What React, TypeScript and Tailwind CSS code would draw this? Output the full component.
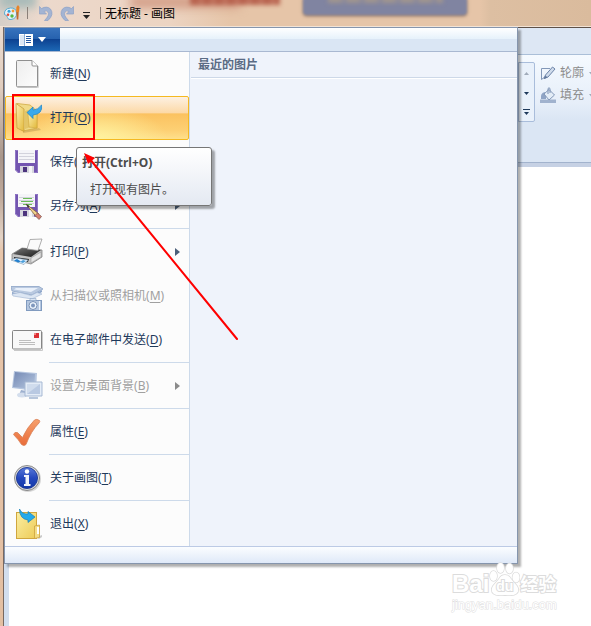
import type { ReactNode } from "react";

function NewIcon() {
  return (
    <svg viewBox="0 0 32 32" className="h-8 w-8 shrink-0" aria-hidden="true">
      <defs>
        <linearGradient id="sheet" x1="0" y1="0" x2="1" y2="1">
          <stop offset="0" stopColor="#ededed" />
          <stop offset="1" stopColor="#fdfdfd" />
        </linearGradient>
      </defs>
      <path d="M6.5 29.5h21V8" fill="none" stroke="#d8d8d8" />
      <path d="M5.5 3.5q0-1 1-1H21l5.5 5.5v20q0 .8-1 .8h-19q-1 0-1-1z" fill="url(#sheet)" stroke="#8f8f8f" />
      <path d="M21 2.5V7q0 1 1 1h4.500" fill="#fff" stroke="#8f8f8f" />
    </svg>
  );
}

function OpenIcon() {
  return (
    <svg viewBox="0 0 32 32" className="h-8 w-8 shrink-0" aria-hidden="true">
      <defs>
        <linearGradient id="folder" x1="0" y1="0" x2="1" y2="1">
          <stop offset="0" stopColor="#fdf0b0" />
          <stop offset="1" stopColor="#e2b93c" />
        </linearGradient>
      </defs>
      <path d="M12 28l16-2 2 2-18 3z" fill="#b99a52" opacity=".5" />
      <path d="M6 1.500L19 3l7 6v17l-14 3z" fill="#f0da88" stroke="#d0ab45" strokeWidth=".8" />
      <path d="M14 9l3-1 3 2v15l-6 2z" fill="#e3c566" />
      <path d="M17 12l9-2v16l-8-1z" fill="url(#folder)" stroke="#cfa43b" strokeWidth=".6" />
      <path d="M5 1.500l8 5.500v22.500L6 26z" fill="url(#folder)" stroke="#c9a03c" strokeWidth=".8" />
      <path d="M16 10.500L22 5v3q5 0 8.500-5 1.500 9-8.500 10v3.500z" fill="#39a9ec" stroke="#1682c8" strokeWidth=".7" />
    </svg>
  );
}

function SaveIcon({ pencil = false }: { pencil?: boolean }) {
  return (
    <svg viewBox="0 0 32 32" className="h-8 w-8 shrink-0" aria-hidden="true">
      <path d="M4 4h23v23H7l-3-3z" fill="#7355b0" />
      <path d="M4.500 4.500h22v22H7.500l-3-3z" fill="none" stroke="#8f77c4" />
      <path d="M7 4h17v13H7z" fill="#f5f5f8" />
      <path d="M8 7.500h15M8 10.500h15M8 13.500h15" stroke="#d3d3dc" />
      {pencil && <path d="M12 8.500h9M10 11.500h12M12 14.500h9" stroke="#6abb55" />}
      <path d="M9 20h14v7H9z" fill="#d6d6de" />
      <path d="M12 21h4v5h-4z" fill="#4c347d" />
      <path d="M18 20h3v7h-3z" fill="#f4f4f7" />
      {pencil && (
        <g>
          <path d="M15 14l13 10-2.500 3z" fill="#f3d38d" stroke="#86643a" strokeWidth=".8" />
          <path d="M15 14l3.500 2-1.500 2z" fill="#333" />
          <path d="M26.500 23l4 3.500-2.500 3-4-4z" fill="#d77e70" stroke="#765149" strokeWidth=".7" />
        </g>
      )}
    </svg>
  );
}

function PrintIcon() {
  return (
    <svg viewBox="0 0 32 32" className="h-8 w-8 shrink-0" aria-hidden="true">
      <defs>
        <linearGradient id="printer" x1="0" y1="0" x2="1" y2="1">
          <stop offset="0" stopColor="#777" />
          <stop offset="1" stopColor="#191919" />
        </linearGradient>
      </defs>
      <path d="M1 18L11 12l20 2v7L20 28 1 23z" fill="#c3c3c3" stroke="#777" strokeWidth=".7" />
      <path d="M2 18l9-6 19 2-10 7z" fill="url(#printer)" />
      <path d="M16 13l3-9.500L31 3l-4 11.500z" fill="#fafafa" stroke="#999" strokeWidth=".8" />
      <path d="M20 22l10-6v5l-10 6z" fill="#e2e2e2" stroke="#8c8c8c" strokeWidth=".5" />
      <path d="M3 21l15 2-1 3-14-3z" fill="#282828" />
      <path d="M0 24l5-2 12 2-4 4.500z" fill="#e9f4ff" stroke="#7693ac" strokeWidth=".6" />
      <path d="M3 24.500l3-1.500 4 2.500-3 1z" fill="#2481cf" />
      <path d="M9 26l3-2 3 1-3 2z" fill="#4c9fd9" />
    </svg>
  );
}

function ScannerIcon() {
  return (
    <svg viewBox="0 0 32 32" className="h-8 w-8 shrink-0" aria-hidden="true">
      <path d="M0 6.500h28l4 2.500-11 6-20-4z" fill="#b9c9e0" stroke="#8ba3c5" strokeWidth=".8" />
      <path d="M5 8h22l-7 4L3 9.500z" fill="#e9f0fa" />
      <path d="M1 12l19 4 11-6v2l-10 6L1 14.500z" fill="#8ea6ca" />
      <path d="M1 14l8-1.500 11 3 6-3 5 1.500-10 5L2 16z" fill="#dce6f3" stroke="#a0b4d1" strokeWidth=".6" />
      <rect x="15.500" y="20.500" width="15" height="10" fill="#b5c7e0" stroke="#819bbf" />
      <path d="M19 18.500h6v2h-6z" fill="#dce6f4" stroke="#8ca4c5" strokeWidth=".6" />
      <circle cx="22" cy="25.500" r="4" fill="#edf4fb" stroke="#7991b5" />
      <circle cx="22" cy="25.500" r="2" fill="#7e97bc" />
      <path d="M28.500 21v9" stroke="#eef4fb" />
    </svg>
  );
}

function MailIcon() {
  return (
    <svg viewBox="0 0 32 32" className="h-8 w-8 shrink-0" aria-hidden="true">
      <path d="M3 26.500h28.500V8" fill="none" stroke="#c9c9c9" />
      <rect x="1.500" y="6.500" width="29" height="18.500" rx="1" fill="#f8f8f8" stroke="#858585" />
      <path d="M23 9h5v5h-5z" fill="#dc3035" />
      <path d="M23 9h2v2h-2z" fill="#ef8583" />
      <path d="M8 16.500h12M8 18.500h16M8 20.500h16" stroke="#b6b6b6" strokeWidth=".9" />
    </svg>
  );
}

function DesktopIcon() {
  return (
    <svg viewBox="0 0 32 32" className="h-8 w-8 shrink-0" aria-hidden="true">
      <defs>
        <linearGradient id="screen" x1="0" y1="0" x2="1" y2="1">
          <stop offset="0" stopColor="#7489b4" />
          <stop offset="1" stopColor="#b6c7e0" />
        </linearGradient>
      </defs>
      <path d="M3 1l23 2-1 18L1 18z" fill="#b6c6df" />
      <path d="M4 2l20 2-1 15L2 17z" fill="url(#screen)" />
      <path d="M10 20l5 1v4H8z" fill="#9db0cf" />
      <ellipse cx="11" cy="25" rx="5" ry="2.500" fill="#d4deed" />
      <path d="M14 12h17v14H14z" fill="#e4ecf7" stroke="#a7b9d3" />
      <path d="M16 14h13v10H16z" fill="#b9c9e2" />
      <path d="M16 24V14h13z" fill="#d0dced" />
      <path d="M18 27h9v2h-9z" fill="#b7c6dc" />
    </svg>
  );
}

function CheckIcon() {
  return (
    <svg viewBox="0 0 32 32" className="h-8 w-8 shrink-0" aria-hidden="true">
      <defs>
        <linearGradient id="tick" x1="0" y1="0" x2="0" y2="1">
          <stop offset="0" stopColor="#f6a06d" />
          <stop offset="1" stopColor="#e96c39" />
        </linearGradient>
      </defs>
      <path
        d="M2.500 18.500q1-3 4-2l5 5q4.500-10 12-17.500 2-1.500 5 .5.800 1-.5 2.500Q20 15 15 28.500q-2 2-4.500 0-3-5-8-10z"
        fill="url(#tick)"
        stroke="#d88158"
        strokeWidth=".8"
      />
    </svg>
  );
}

function InfoIcon() {
  return (
    <svg viewBox="0 0 32 32" className="h-8 w-8 shrink-0" aria-hidden="true">
      <defs>
        <linearGradient id="info" x1="0" y1="0" x2="0" y2="1">
          <stop offset="0" stopColor="#5979da" />
          <stop offset=".5" stopColor="#2548bd" />
          <stop offset="1" stopColor="#1236a7" />
        </linearGradient>
      </defs>
      <circle cx="17" cy="17" r="13" fill="#bdbdbd" opacity=".6" />
      <circle cx="16" cy="16" r="12.500" fill="#d9d9dc" stroke="#747474" strokeWidth=".8" />
      <circle cx="16" cy="16" r="10.600" fill="url(#info)" stroke="#14328f" strokeWidth=".8" />
      <circle cx="16" cy="9.500" r="2.200" fill="#fff" />
      <path d="M13 13h5v9h1.500v2H13v-2h1.500v-7H13z" fill="#f2f4fb" />
    </svg>
  );
}

function ExitIcon() {
  return (
    <svg viewBox="0 0 32 32" className="h-8 w-8 shrink-0" aria-hidden="true">
      <defs>
        <linearGradient id="exit" x1="0" y1="0" x2="1" y2="1">
          <stop offset="0" stopColor="#fbeea2" />
          <stop offset="1" stopColor="#edcb57" />
        </linearGradient>
      </defs>
      <path d="M26 29l5-2v2l-3 2z" fill="#999" opacity=".5" />
      <rect x="5.500" y="4.500" width="20" height="26" fill="url(#exit)" stroke="#d0a63e" />
      <path d="M23.500 18l5-1v12.500l-5 1z" fill="#f3dc84" stroke="#cda13d" strokeWidth=".8" />
      <path d="M26 19h2v7h-2z" fill="#fff" />
      <path d="M8.500 1Q11 6.500 17 6V3.500l7 5.500-7 5.500V12Q8.500 11 8.500 1z" fill="#23aaeb" stroke="#197fb8" strokeWidth=".7" />
    </svg>
  );
}

function PaintLogo() {
  return (
    <svg viewBox="0 0 16 16" className="h-4 w-4" aria-hidden="true">
      <path d="M6.500 3Q12 2.500 12.500 8T7 14.500Q4 15 3.500 12.500T.5 9.500Q0 3.500 6.500 3z" fill="#e4f3fb" stroke="#5aabd0" />
      <circle cx="5" cy="6.300" r="1.500" fill="#34a4dc" />
      <circle cx="9" cy="6" r="1.400" fill="#f29b35" />
      <circle cx="4" cy="9.700" r="1.300" fill="#e24e3a" />
      <circle cx="8" cy="11" r="1.700" fill="#55b942" />
      <path d="M12 7l.500-5L14 0l1.500 2-.5 5z" fill="#e78328" />
      <path d="M12.300 7h2.400l-.4 7.500h-1.500z" fill="#c56c2c" />
    </svg>
  );
}

function UndoIcon({ flip = false }: { flip?: boolean }) {
  return (
    <svg viewBox="0 0 14 15" className={flip ? "h-[15px] w-3.5 -scale-x-100" : "h-[15px] w-3.5"} aria-hidden="true">
      <path
        d="M.5.5l2 2Q8-.5 11.500 3q4 5.500-2.500 11.500H5.500Q11 9 9 6 7.500 4 5 5.500L7.500 8h-7z"
        fill="#a3b4d3"
        stroke="#8da1c5"
        strokeWidth=".7"
      />
    </svg>
  );
}

function Triangle({ color = "#1e395b" }: { color?: string }) {
  return (
    <svg viewBox="0 0 5 3" className="h-[3px] w-[5px] shrink-0" aria-hidden="true">
      <path d="M0 0h5L2.500 3z" fill={color} />
    </svg>
  );
}

type Item = {
  label: string;
  hotkey: string;
  icon: ReactNode;
  state?: "active" | "disabled";
  submenu?: boolean;
};

const groups: Item[][] = [
  [
    { label: "新建", hotkey: "N", icon: <NewIcon /> },
    { label: "打开", hotkey: "O", icon: <OpenIcon />, state: "active" },
    { label: "保存", hotkey: "S", icon: <SaveIcon /> },
    { label: "另存为", hotkey: "A", icon: <SaveIcon pencil />, submenu: true },
  ],
  [
    { label: "打印", hotkey: "P", icon: <PrintIcon />, submenu: true },
    { label: "从扫描仪或照相机", hotkey: "M", icon: <ScannerIcon />, state: "disabled" },
    { label: "在电子邮件中发送", hotkey: "D", icon: <MailIcon /> },
  ],
  [{ label: "设置为桌面背景", hotkey: "B", icon: <DesktopIcon />, state: "disabled", submenu: true }],
  [{ label: "属性", hotkey: "E", icon: <CheckIcon /> }],
  [{ label: "关于画图", hotkey: "T", icon: <InfoIcon /> }],
  [{ label: "退出", hotkey: "X", icon: <ExitIcon /> }],
];

function MenuItem({ item }: { item: Item }) {
  const disabled = item.state === "disabled";
  const look =
    item.state === "active"
      ? "border-[#f5b921] bg-[radial-gradient(ellipse_at_bottom,#fff3a0_0%,#fff3a000_55%),linear-gradient(#fdf1e2_0%,#fcd9a6_38%,#fbc260_40%,#fdd074_80%,#fee08c_100%)]"
      : "border-transparent";
  return (
    <button
      type="button"
      role="menuitem"
      disabled={disabled}
      className={`flex h-11 w-full items-center gap-[7px] rounded-[2px] border pr-2 pl-[5px] text-left whitespace-nowrap ${look} ${
        disabled ? "text-[#a0a0a0]" : "text-[#1e395b]"
      }`}
    >
      {item.icon}
      <span className="grow">
        {item.label}(<span className="underline underline-offset-2">{item.hotkey}</span>)
      </span>
      {item.submenu && (
        <svg viewBox="0 0 5 8" className="h-2 w-[5px] shrink-0" aria-hidden="true">
          <path d="M0 0l5 4-5 4z" fill={disabled ? "#8b8b8b" : "#4c607a"} />
        </svg>
      )}
    </button>
  );
}

function TitleBar() {
  return (
    <header className="relative flex h-[27px] shrink-0 items-center overflow-hidden border-b border-[#f2e3d5] bg-[linear-gradient(90deg,#d6cfc8_0px,#ecd9cc_40px,#ecd4c2_170px,#e6c5a8_230px,#e6c5a8_480px,#ddbfa2_490px,#dabb9d_100%)]">
      <div className="absolute -top-2 left-0 h-4 w-9 bg-[#a9bbb9] blur-[4px]" />
      <div className="absolute -top-1 left-[130px] h-3 w-[110px] bg-[#d39d86] blur-[5px]" />
      <div className="absolute -top-3 left-[190px] h-[17px] w-[90px] bg-[repeating-linear-gradient(90deg,#b86450_0px,#b86450_9px,#cf8c76_12px)] blur-[2px]" />
      <div className="absolute -top-1 left-[303px] h-[19px] w-[164px] rounded bg-[#8084a1] shadow-[0_1px_3px_#77605a] blur-[1px]" />
      <div className="absolute -top-1 left-[328px] h-[7px] w-[115px] bg-[repeating-linear-gradient(90deg,#a0958f_0px,#a0958f_12px,#8084a1_18px)] blur-[2px]" />
      <div className="relative flex items-center pl-1">
        <PaintLogo />
        <span className="ml-[7px] h-3 w-px bg-[#8b8079]" />
        <button type="button" aria-label="撤消" className="ml-[11px]">
          <UndoIcon />
        </button>
        <button type="button" aria-label="重做" className="ml-[7px]">
          <UndoIcon flip />
        </button>
        <button type="button" aria-label="自定义快速访问工具栏" className="ml-[9px] flex flex-col items-center gap-0.5 pt-1">
          <span className="h-px w-[7px] bg-[#222]" />
          <svg viewBox="0 0 7 4" className="h-1 w-[7px]" aria-hidden="true">
            <path d="M0 0h7L3.500 4z" fill="#222" />
          </svg>
        </button>
        <span className="ml-[10px] h-3 w-px bg-[#8b8079]" />
        <h1 className="pt-px pl-1 text-black">无标题 - 画图</h1>
      </div>
    </header>
  );
}

function Ribbon() {
  return (
    <div className="border-t border-[#5d5149] bg-[#dde7f4] pt-[26px]">
      <div className="flex h-[109px] justify-end border-y border-[#aabfd8] border-b-[#a2b3cd] bg-[linear-gradient(#f5faff,#e6eef9_45%,#dbe6f4_60%,#dbe6f4)] pt-[7px]">
        <div className="flex h-[60px] w-[17px] flex-col rounded-r-[2px] border border-[#a9bddb] bg-[#e9f1fb]">
          <button type="button" aria-label="上一行" className="grid h-5 place-items-center">
            <span className="rotate-180">
              <Triangle color="#a0abba" />
            </span>
          </button>
          <button type="button" aria-label="下一行" className="grid h-5 place-items-center">
            <Triangle />
          </button>
          <button type="button" aria-label="更多形状" className="flex h-[18px] flex-col items-center justify-center gap-0.5">
            <span className="h-px w-[7px] bg-[#1e395b]" />
            <Triangle />
          </button>
        </div>
        <div className="flex w-14 flex-col pl-[5px] text-[#8d8d8d]">
          <button type="button" className="flex h-[22px] items-center gap-1 whitespace-nowrap">
            <svg viewBox="0 0 16 16" className="h-4 w-4 shrink-0" aria-hidden="true">
              <path d="M10 3.500H1.500v11L6 11" fill="none" stroke="#8398b8" />
              <path d="M4 13.500L5.500 10l7-8 2.500 2-7 8z" fill="#cfdbeb" stroke="#6d84a8" />
              <path d="M4 14l1.500-3.500 2 2z" fill="#60779b" />
            </svg>
            轮廓
            <span className="pl-px">
              <Triangle color="#a0abba" />
            </span>
          </button>
          <button type="button" className="flex h-[22px] items-center gap-1 whitespace-nowrap">
            <svg viewBox="0 0 16 16" className="h-4 w-4 shrink-0" aria-hidden="true">
              <path d="M0 12.500h16V16H0z" fill="#a0b2ce" />
              <path d="M5 5Q0 6 1 12h5V8z" fill="#8fa4c5" />
              <path d="M4 7l5-4.500L14.500 8 9 13z" fill="#e4edf7" stroke="#8297b7" />
              <path d="M8 7V1.500Q9 0 10 1.500V6" fill="none" stroke="#7c91b3" />
            </svg>
            填充
            <span className="pl-px">
              <Triangle color="#a0abba" />
            </span>
          </button>
        </div>
      </div>
      <div className="h-1 bg-[#c6d1e4]" />
    </div>
  );
}

function FileMenu() {
  return (
    <div className="absolute top-[27px] left-1 w-[514px] border border-[#8595ad] bg-[#eff3fb] shadow-[3px_3px_2px_#00000050]">
      <div className="flex h-6 border-b border-[#a9b8d1] bg-[linear-gradient(#ffffff,#e7f2fb_46%,#dae6f4_50%,#dae6f4)]">
        <button
          type="button"
          aria-label="画图菜单"
          className="flex w-[55px] items-center gap-[5px] bg-[linear-gradient(#3873bd,#2661ae_48%,#0d4291_50%,#1d68b5)] pl-3.5"
        >
          <svg viewBox="0 0 14 12" className="h-3 w-3.5" aria-hidden="true">
            <path d="M0 0h14v12H0z" fill="#fff" />
            <path d="M1 1h4v10H1z" fill="#dce7f5" />
            <path d="M5.500 0v12" stroke="#8badd5" />
            <path d="M7 2.500h5M7 4.500h5M7 6.500h5M7 8.500h5" stroke="#2459a3" />
          </svg>
          <svg viewBox="0 0 8 5" className="h-[5px] w-2" aria-hidden="true">
            <path d="M0 0h8L4 5z" fill="#fff" />
          </svg>
        </button>
      </div>
      <div className="flex">
        <div role="menu" className="w-[185px] border-r border-[#cddaea] bg-[#fcfcfc]">
          {groups.map((group, i) => (
            <div key={group[0].hotkey} role="group">
              {i > 0 && <div className="ml-11 h-0.5 border-t border-[#cddaea]" />}
              {group.map((item) => (
                <MenuItem key={item.hotkey} item={item} />
              ))}
            </div>
          ))}
        </div>
        <section className="ml-px grow">
          <h2 className="border-b border-[#cdd8e8] py-1 pl-[7px] leading-[17px] font-bold text-[#5a6b84] shadow-[0_1px_#fff]">
            最近的图片
          </h2>
        </section>
      </div>
      <div className="h-[17px] border-t border-[#bccae5] bg-[linear-gradient(#fbfdff,#dfe9f8)]" />
    </div>
  );
}

function Tooltip() {
  return (
    <div
      role="tooltip"
      className="absolute top-[147px] left-[76px] w-[136px] rounded-[3px] border border-[#767676] bg-[linear-gradient(#ffffff,#e4e9f2)] px-[5px] py-1.5 text-[#4c4c4c] shadow-[3px_3px_2px_#00000055]"
    >
      <p className="leading-[18px] font-bold">打开(Ctrl+O)</p>
      <p className="mt-[9px] pl-2 leading-[18px]">打开现有图片。</p>
    </div>
  );
}

function Annotation() {
  return (
    <svg viewBox="0 0 240 345" className="pointer-events-none absolute top-0 left-0 h-[345px] w-60" aria-hidden="true">
      <rect x="13" y="95" width="81" height="44" fill="none" stroke="#f00" strokeWidth="2" />
      <path d="M89 158L237 339" stroke="#f00" strokeWidth="2" strokeLinecap="round" />
      <path d="M84 153l11 5-7 6z" fill="#f00" />
    </svg>
  );
}

function Watermark() {
  return (
    <div className="absolute right-[34px] bottom-3 flex w-[105px] flex-col text-white [paint-order:stroke_fill] [-webkit-text-stroke:2px_#dcdcdc]">
      <div className="flex h-9 items-end font-bold">
        <span className="font-['Liberation_Sans'] text-2xl leading-6">Bai</span>
        <span className="relative grid h-[34px] w-[31px] shrink-0 place-items-end justify-center">
          <svg viewBox="0 0 31 34" className="absolute inset-0 h-full w-full" aria-hidden="true">
            <g fill="#fff" stroke="#dcdcdc" strokeWidth="1.500">
              <ellipse cx="4.500" cy="14" rx="3.500" ry="5" />
              <ellipse cx="11.500" cy="6" rx="3.500" ry="5" />
              <ellipse cx="20.500" cy="6.500" rx="3.500" ry="5" />
              <ellipse cx="27" cy="15.500" rx="3.500" ry="5" />
              <path d="M16 13q4 0 6 4l6 7q3 5-1 8-3 2-11 1-8 1-11-1-4-3-1-8l6-7q2-4 6-4z" />
            </g>
          </svg>
          <span className="relative font-['Liberation_Sans'] text-sm leading-5">du</span>
        </span>
        <span className="text-lg leading-6 whitespace-nowrap">经验</span>
      </div>
      <span className="font-['Liberation_Sans'] text-[13px] leading-[18px] whitespace-nowrap [-webkit-text-stroke:1px_#e0e0e0]">
        jingyan.baidu.com
      </span>
    </div>
  );
}

export default function App() {
  return (
    <div className="relative flex min-h-screen flex-col overflow-hidden bg-white font-['Noto_Sans','Noto_Sans_CJK_SC',sans-serif] text-xs">
      <TitleBar />
      <div className="flex grow">
        <div className="w-1 shrink-0 border-r border-[#776860] bg-[linear-gradient(#ecdccf_0px,#e0cdbf_60px,#a8968b_130px,#c0aa9b_170px,#e3d3c6_210px,#e7c5aa_225px,#e3bfa2)]" />
        <div className="flex min-w-0 grow flex-col">
          <Ribbon />
          <main className="grow border-l-[5px] border-[#d2deee] bg-white" />
        </div>
      </div>
      <FileMenu />
      <Tooltip />
      <Annotation />
      <Watermark />
    </div>
  );
}
